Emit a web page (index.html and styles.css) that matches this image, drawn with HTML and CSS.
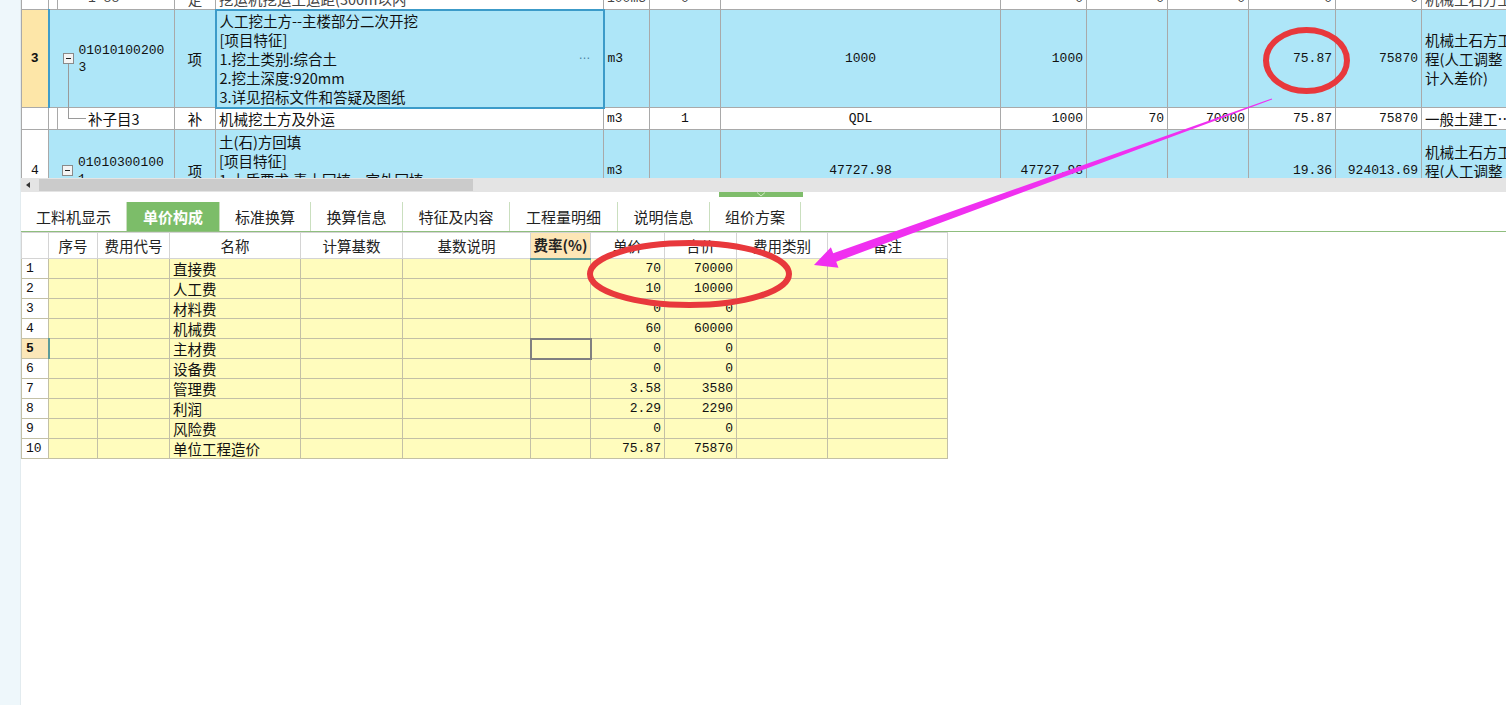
FILE: index.html
```html
<!DOCTYPE html>
<html>
<head>
<meta charset="utf-8">
<link rel="stylesheet" href="styles.css">
</head>
<body>
<div class="app">
  <div class="side"></div>
  <div class="main">
    <div class="top-panel">
      <table class="grid top">
        <colgroup>
          <col class="t-rn"><col class="t-tr"><col class="t-code"><col class="t-type"><col class="t-name"><col class="t-unit"><col class="t-qty"><col class="t-expr"><col class="t-c1"><col class="t-c2"><col class="t-c3"><col class="t-c4"><col class="t-c5"><col class="t-last">
        </colgroup>
        <tr class="r0">
          <td></td><td></td>
          <td class="subcode mono">1-88</td>
          <td class="ctr">定</td>
          <td>挖运机挖运土运距(300m以内</td>
          <td class="mono">100m3</td>
          <td class="mono ctr">0</td>
          <td></td>
          <td class="mono num">0</td>
          <td class="mono num">0</td>
          <td class="mono num">0</td>
          <td class="mono num">0</td>
          <td class="mono num">0</td>
          <td>机械土石方工</td>
        </tr>
        <tr class="r3 blue">
          <td class="rn cur">3</td>
          <td colspan="2" class="codecell selrow"><div class="code"><span class="minus"></span><span class="mono">01010100200<br>3</span></div></td>
          <td class="ctr">项</td>
          <td class="name focus"><div class="name-in"><div>人工挖土方--主楼部分二次开挖<br>[项目特征]<br>1.挖土类别:综合土<br>2.挖土深度:920mm<br>3.详见招标文件和答疑及图纸</div><span class="dots">…</span></div></td>
          <td class="mono">m3</td>
          <td></td>
          <td class="mono ctr">1000</td>
          <td class="mono num">1000</td>
          <td></td>
          <td></td>
          <td class="mono num">75.87</td>
          <td class="mono num">75870</td>
          <td>机械土石方工<br>程(人工调整<br>计入差价)</td>
        </tr>
        <tr class="sub">
          <td class="rn"></td><td></td>
          <td class="subcode tree">补子目3</td>
          <td class="ctr">补</td>
          <td>机械挖土方及外运</td>
          <td class="mono">m3</td>
          <td class="mono ctr">1</td>
          <td class="mono ctr">QDL</td>
          <td class="mono num">1000</td>
          <td class="mono num">70</td>
          <td class="mono num">70000</td>
          <td class="mono num">75.87</td>
          <td class="mono num">75870</td>
          <td>一般土建工…</td>
        </tr>
        <tr class="r4 blue">
          <td class="rn">4</td>
          <td colspan="2" class="codecell"><div class="code"><span class="minus"></span><span class="mono">01010300100<br>1</span></div></td>
          <td class="ctr">项</td>
          <td class="name top-al"><div>土(石)方回填<br>[项目特征]<br>1.土质要求:素土回填，室外回填</div></td>
          <td class="mono">m3</td>
          <td></td>
          <td class="mono ctr">47727.98</td>
          <td class="mono num">47727.98</td>
          <td></td>
          <td></td>
          <td class="mono num">19.36</td>
          <td class="mono num">924013.69</td>
          <td>机械土石方工<br>程(人工调整<br>计入差价)</td>
        </tr>
      </table>
    </div>
    <div class="hscroll"><div class="sbtn"></div><div class="thumb"></div></div>
    <div class="splitter">
      <div class="handle"><svg width="12" height="5" viewBox="0 0 12 5"><path d="M2 0.5 L6 4 L10 0.5" fill="none" stroke="#cfe8c4" stroke-width="1"/></svg></div>
    </div>
    <div class="tabs">
      <div class="tab tw1">工料机显示</div>
      <div class="tab tw2 active">单价构成</div>
      <div class="tab tw3">标准换算</div>
      <div class="tab tw4">换算信息</div>
      <div class="tab tw5">特征及内容</div>
      <div class="tab tw6">工程量明细</div>
      <div class="tab tw7">说明信息</div>
      <div class="tab tw8">组价方案</div>
    </div>
    <table class="grid bot">
      <colgroup>
        <col class="b-rn"><col class="b-no"><col class="b-code"><col class="b-name"><col class="b-base"><col class="b-desc"><col class="b-rate"><col class="b-price"><col class="b-total"><col class="b-type"><col class="b-note">
      </colgroup>
      <tr class="hd">
        <td></td><td>序号</td><td>费用代号</td><td>名称</td><td>计算基数</td><td>基数说明</td><td class="rate">费率(%)</td><td>单价</td><td>合价</td><td>费用类别</td><td>备注</td>
      </tr>
      <tr><td class="rn">1</td><td></td><td></td><td class="nm">直接费</td><td></td><td></td><td></td><td class="num">70</td><td class="num">70000</td><td></td><td></td></tr>
      <tr><td class="rn">2</td><td></td><td></td><td class="nm">人工费</td><td></td><td></td><td></td><td class="num">10</td><td class="num">10000</td><td></td><td></td></tr>
      <tr><td class="rn">3</td><td></td><td></td><td class="nm">材料费</td><td></td><td></td><td></td><td class="num">0</td><td class="num">0</td><td></td><td></td></tr>
      <tr><td class="rn">4</td><td></td><td></td><td class="nm">机械费</td><td></td><td></td><td></td><td class="num">60</td><td class="num">60000</td><td></td><td></td></tr>
      <tr class="cur-row"><td class="rn cur">5</td><td class="selrow"></td><td></td><td class="nm">主材费</td><td></td><td></td><td class="selcell"></td><td class="num">0</td><td class="num">0</td><td></td><td></td></tr>
      <tr><td class="rn">6</td><td></td><td></td><td class="nm">设备费</td><td></td><td></td><td></td><td class="num">0</td><td class="num">0</td><td></td><td></td></tr>
      <tr><td class="rn">7</td><td></td><td></td><td class="nm">管理费</td><td></td><td></td><td></td><td class="num">3.58</td><td class="num">3580</td><td></td><td></td></tr>
      <tr><td class="rn">8</td><td></td><td></td><td class="nm">利润</td><td></td><td></td><td></td><td class="num">2.29</td><td class="num">2290</td><td></td><td></td></tr>
      <tr><td class="rn">9</td><td></td><td></td><td class="nm">风险费</td><td></td><td></td><td></td><td class="num">0</td><td class="num">0</td><td></td><td></td></tr>
      <tr><td class="rn">10</td><td></td><td></td><td class="nm">单位工程造价</td><td></td><td></td><td></td><td class="num">75.87</td><td class="num">75870</td><td></td><td></td></tr>
    </table>
  </div>
</div>
<svg class="overlay" width="1506" height="705" viewBox="0 0 1506 705">
  <ellipse cx="1306.5" cy="60.5" rx="40.5" ry="30.5" fill="none" stroke="#e8383c" stroke-width="6"/>
  <ellipse cx="689.5" cy="274" rx="99.5" ry="31" fill="none" stroke="#e8383c" stroke-width="6"/>
  <polygon fill="#f030f0" points="1271.8,98.5 833.2,253.3 830.9,247.2 814,265 838.5,267.8 836.2,261.7 1272.2,99.5"/>
</svg>
</body>
</html>
```

FILE: styles.css
```css
html, body {
  margin: 0;
  padding: 0;
}
body {
  width: 1506px;
  height: 705px;
  overflow: hidden;
  position: relative;
  background: #fff;
  font-family: "Noto Sans CJK SC", "Liberation Sans", sans-serif;
  font-size: 14.5px;
  color: #111;
}
.app {
  display: flex;
  height: 705px;
}
.side {
  width: 20px;
  flex: none;
  background: #eef7fb;
  border-right: 1px solid #e2ebef;
}
.main {
  flex: 1;
  min-width: 0;
  display: flex;
  flex-direction: column;
  overflow: hidden;
}
.mono {
  font-family: "Liberation Mono", "Noto Sans CJK SC", monospace;
  font-size: 13px;
}
table.grid {
  border-collapse: collapse;
  table-layout: fixed;
}
.top-panel {
  height: 178px;
  overflow: hidden;
  flex: none;
}
.top {
  width: 1500px;
  margin-top: -13px;
}
.t-rn { width: 27px; }
.t-tr { width: 9px; }
.t-code { width: 117px; }
.t-type { width: 41px; }
.t-name { width: 388px; }
.t-unit { width: 46px; }
.t-qty { width: 71px; }
.t-expr { width: 280px; }
.t-c1 { width: 86px; }
.t-c2 { width: 81px; }
.t-c3 { width: 81px; }
.t-c4 { width: 87px; }
.t-c5 { width: 86px; }
.t-last { width: 100px; }
.top td {
  border: 1px solid #a9a9a9;
  padding: 0 3px;
  line-height: 19px;
  vertical-align: middle;
  white-space: nowrap;
  overflow: hidden;
}
.top tr.r0 { height: 22px; }
.top tr.r0 td { color: #444; }
.top tr.r3 { height: 98px; }
.top tr.sub { height: 22px; }
.top tr.r4 { height: 82px; }
.top tr.blue td { background: #aee6f8; }
.top td.rn {
  background: #fff;
  text-align: center;
  font-family: "Liberation Mono", monospace;
  font-size: 13px;
  padding: 0;
}
.top tr.blue td.rn { background: #fff; }
.top tr.blue td.rn.cur {
  background: #fde6a8;
  font-weight: bold;
}
.ctr { text-align: center; }
.top td.num { text-align: right; }
.top td.subcode { padding-left: 30px; }
.top td.tree { position: relative; overflow: visible; }
.top td.tree::before {
  content: "";
  position: absolute;
  left: 10px;
  top: -44px;
  width: 17px;
  height: 54px;
  border-left: 1px solid #9a9a9a;
  border-bottom: 1px solid #9a9a9a;
}
.top td.codecell { padding: 0 0 0 13px; }
.top td.selrow { border-left: 2px solid #3f9dca; }
.code {
  display: flex;
  align-items: center;
  gap: 5px;
}
.code .mono { line-height: 17px; }
.minus {
  width: 9px;
  height: 9px;
  border: 1px solid #8a8a8a;
  background: #f4f4f4;
  position: relative;
  flex: none;
}
.minus::after {
  content: "";
  position: absolute;
  left: 2px;
  right: 2px;
  top: 4px;
  height: 1px;
  background: #222;
}
.top td.name {
  vertical-align: top;
  padding: 0 3px;
}
.top td.focus {
  border: 2px solid #3c9bc9;
}
.name-in {
  display: flex;
  justify-content: space-between;
  height: 95px;
}
.dots {
  align-self: center;
  color: #4a7fa0;
  font-family: "Liberation Sans", sans-serif;
  font-size: 12px;
  line-height: 12px;
  padding-right: 9px;
  margin-top: -6px;
}
.top td.top-al {
  vertical-align: top;
  padding-top: 2px;
}
.hscroll {
  height: 14px;
  flex: none;
  background: #e4e4e4;
  display: flex;
  align-items: center;
}
.sbtn {
  width: 14px;
  height: 14px;
  flex: none;
  position: relative;
}
.sbtn::after {
  content: "";
  position: absolute;
  left: 5px;
  top: 4px;
  border-right: 4px solid #333;
  border-top: 3px solid transparent;
  border-bottom: 3px solid transparent;
}
.thumb {
  margin-left: 4px;
  width: 434px;
  height: 12px;
  background: #cbcbcb;
}
.splitter {
  height: 10px;
  flex: none;
}
.handle {
  margin-left: 698px;
  width: 84px;
  height: 5px;
  background: #7fbd6b;
  display: flex;
  justify-content: center;
  align-items: flex-start;
}
.handle svg { display: block; }
.tabs {
  display: flex;
  height: 29px;
  flex: none;
  border-bottom: 1px solid #8fbe7e;
}
.tab {
  box-sizing: border-box;
  border-right: 1px solid #cadfbf;
  text-align: center;
  line-height: 29px;
  font-size: 15px;
  color: #222;
}
.tab.active {
  background: #7cbd69;
  color: #fff;
  font-weight: bold;
}
.tw1 { width: 106px; }
.tw2 { width: 93px; }
.tw3 { width: 91px; }
.tw4 { width: 92px; }
.tw5 { width: 107px; }
.tw6 { width: 108px; }
.tw7 { width: 92px; }
.tw8 { width: 91px; }
.bot {
  width: 926px;
  margin-top: 0;
}
.b-rn { width: 27px; }
.b-no { width: 49px; }
.b-code { width: 72px; }
.b-name { width: 131px; }
.b-base { width: 102px; }
.b-desc { width: 128px; }
.b-rate { width: 60px; }
.b-price { width: 74px; }
.b-total { width: 72px; }
.b-type { width: 91px; }
.b-note { width: 120px; }
.bot tr { height: 20px; }
.bot td {
  border: 1px solid #c3c0a6;
  padding: 0;
  line-height: 18px;
  background: #fffcbd;
  white-space: nowrap;
  overflow: hidden;
}
.bot tr.hd { height: 26px; }
.bot tr.hd td {
  background: #fff;
  border-color: #d4d4d4;
  text-align: center;
  line-height: 24px;
  color: #222;
}
.bot tr.hd td.rate {
  background: #fde6b6;
  font-weight: bold;
  border-bottom: 2px solid #5c9c9a;
}
.bot td.rn {
  background: #fff;
  padding-left: 4px;
  font-family: "Liberation Mono", monospace;
  font-size: 13px;
}
.bot td.rn.cur {
  background: #fbe7b8;
  font-weight: bold;
}
.bot td.selrow { border-left: 2px solid #5c9c9a; }
.bot td.nm { padding-left: 3px; }
.bot td.num {
  text-align: right;
  padding-right: 3px;
  font-family: "Liberation Mono", monospace;
  font-size: 13px;
}
.bot td.selcell {
  border: 2px solid #808080;
}
.overlay {
  position: absolute;
  left: 0;
  top: 0;
  pointer-events: none;
}
```
